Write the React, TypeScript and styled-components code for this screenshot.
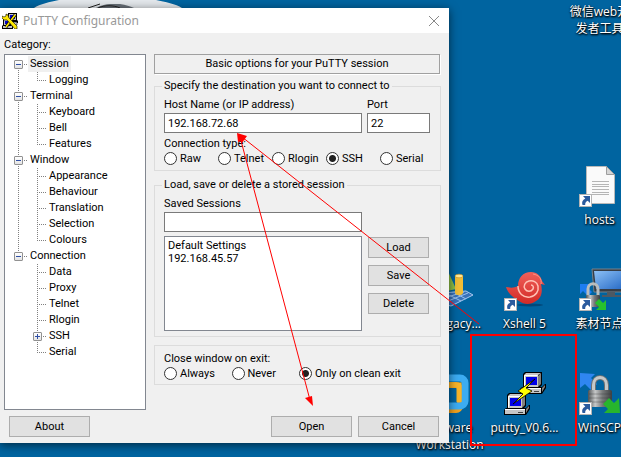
import React, { useState } from "react";
import styled, { createGlobalStyle, css } from "styled-components";

const GlobalStyle = createGlobalStyle`
  *, *::before, *::after { box-sizing: border-box; }
  body { margin: 0; background: #0064a0; }
  body, button, input, select {
    font-family: Roboto, "Liberation Sans", sans-serif;
    font-size: 11px;
    line-height: 16px;
    color: #000;
  }
`;

/* ---------- desktop ---------- */

const Desktop = styled.main`
  position: relative;
  min-height: 100vh;
  padding-top: 8px;
  overflow: hidden;
  background: #0064a0;
`;

const Wallpaper = styled.svg`
  position: absolute;
  top: 0;
  left: 30px;
`;

const IconField = styled.div`
  position: absolute;
  top: -48px;
  right: -16px;
  display: grid;
  grid-template-columns: repeat(3, 75px);
  grid-auto-rows: 104px;
`;

const Shortcut = styled.a<{ $column: number; $row: number }>`
  grid-column: ${(p) => p.$column};
  grid-row: ${(p) => p.$row};
  display: flex;
  flex-direction: column;
  align-items: center;
  gap: 3px;
  color: #fff;
  font-family: "Open Sans", "Noto Sans CJK SC", sans-serif;
  font-size: 12px;
  line-height: 17px;
  text-align: center;
  text-decoration: none;
  white-space: pre;
  text-shadow: 1px 1px 2px #000, 0 1px 2px #000;
`;

const TrailingLabel = styled.span`
  align-self: flex-end;
  padding-right: 6px;
`;

const Picture = styled.svg`
  display: block;
  width: 48px;
  height: 48px;
  flex: none;
`;

const Annotations = styled.svg`
  position: absolute;
  top: 0;
  left: 0;
  pointer-events: none;
`;

/* ---------- dialog ---------- */

const Dialog = styled.form`
  position: relative;
  width: calc(100% - 172px);
  min-width: 440px;
  background: #f0f0f0;
  box-shadow: 0 2px 9px rgba(0, 0, 0, 0.6);
`;

const TitleBar = styled.header`
  display: flex;
  align-items: center;
  gap: 5px;
  height: 25px;
  padding: 0 8px 0 2px;
  background: #fff;
`;

const Title = styled.h1`
  flex: 1;
  margin: 0;
  color: #999;
  font-family: "Noto Sans", sans-serif;
  font-size: 12px;
  font-weight: 400;
`;

const CloseButton = styled.button`
  display: grid;
  place-items: center;
  width: 14px;
  height: 14px;
  padding: 0;
  border: 0;
  background: none;
`;

const Body = styled.div`
  display: grid;
  grid-template-columns: 142px minmax(0, 1fr);
  column-gap: 8px;
  padding: 4px 8px 6px 4px;
`;

const Caption = styled.div`
  grid-column: 1 / -1;
  height: 17px;
`;

const Tree = styled.ul`
  min-height: 356px;
  margin: 0;
  padding: 1px 4px;
  list-style: none;
  background: #fff;
  border: 1px solid #828790;
`;

const TreeRow = styled.li`
  display: flex;
  height: 16px;
`;

const dotsDown = "repeating-linear-gradient(to bottom, #808080 0 1px, transparent 1px 2px)";
const dotsAcross = "repeating-linear-gradient(to right, #808080 0 1px, transparent 1px 2px)";

const Guide = styled.span<{ $up?: boolean; $down?: boolean; $across?: boolean }>`
  display: grid;
  place-items: center;
  flex: none;
  width: 19px;
  height: 16px;
  background-image: ${dotsDown}, ${dotsDown}, ${dotsAcross};
  background-repeat: no-repeat;
  background-position: 9px 0, 9px 8px, 9px 8px;
  background-size:
    ${(p) => (p.$up ? "1px 8px" : "0 0")},
    ${(p) => (p.$down ? "1px 8px" : "0 0")},
    ${(p) => (p.$across ? "10px 1px" : "0 0")};
`;

const Expander = styled.button`
  display: block;
  width: 9px;
  height: 9px;
  padding: 0;
  border: 1px solid #919191;
  border-radius: 1px;
  background: linear-gradient(#fff, #e4e4e4);

  svg { display: block; }
`;

const TreeLabel = styled.button<{ $selected: boolean }>`
  padding: 0 2px;
  border: 0;
  background: ${(p) => (p.$selected ? "#f0f0f0" : "transparent")};
`;

const Panel = styled.section`
  display: flex;
  flex-direction: column;
`;

const PanelTitle = styled.h2`
  margin: 0 1px 4px 0;
  border: 1px solid #a0a0a0;
  box-shadow: 1px 1px 0 #fff;
  font-size: 11px;
  font-weight: 400;
  line-height: 18px;
  text-align: center;
`;

const Group = styled.fieldset`
  min-width: 0;
  margin: 0 0 6px;
  padding: 3px 10px 5px 9px;
  border: 1px solid #dcdcdc;
`;

const PlainGroup = styled(Group)`
  margin: 2px 0 0;
  padding: 5px 10px 4px 9px;
`;

const Legend = styled.legend`
  margin-left: -2px;
  padding: 0 2px;
  line-height: 16px;
`;

const Text = styled.span`
  display: block;
  line-height: 16px;
`;

const HostRow = styled.div`
  display: grid;
  grid-template-columns: minmax(0, 1fr) 63px;
  column-gap: 5px;
  margin-bottom: 3px;
`;

const TextBox = styled.input`
  display: block;
  width: 100%;
  height: 20px;
  padding: 0 3px;
  border: 1px solid #7a7a7a;
  border-radius: 0;
  background: #fff;
`;

const RadioRow = styled.div<{ $columns: number }>`
  display: grid;
  grid-template-columns: repeat(${(p) => p.$columns}, minmax(0, 1fr));
  margin-right: -4px;
`;

const RadioLabel = styled.label`
  display: flex;
  align-items: center;
  gap: 3px;
  height: 13px;
  white-space: nowrap;
`;

const RadioButton = styled.input`
  appearance: none;
  flex: none;
  width: 13px;
  height: 13px;
  margin: 0;
  border: 1px solid #333;
  border-radius: 50%;
  background: #fff;

  &:checked { background: radial-gradient(circle, #222 0 3px, #fff 4px); }
`;

const SessionGrid = styled.div`
  display: grid;
  grid-template-columns: minmax(0, 1fr) 61px;
  column-gap: 6px;
  padding-right: 1px;
`;

const SessionFields = styled.div`
  display: flex;
  flex-direction: column;
  gap: 4px;
`;

const SessionList = styled.select`
  width: 100%;
  height: 95px;
  padding: 2px 3px;
  border: 1px solid #828790;
  border-radius: 0;
  background: #fff;
  outline: 0;

  option {
    min-height: 13px;
    padding: 0;
    line-height: 13px;
  }
`;

const buttonFace = css`
  height: 21px;
  padding: 0;
  border: 1px solid #adadad;
  background: #e1e1e1;
`;

const PushButton = styled.button`
  ${buttonFace}
`;

const SessionButtons = styled.div`
  display: grid;
  align-content: end;
  gap: 7px;
  padding-bottom: 17px;
`;

const Footer = styled.footer`
  grid-column: 1 / -1;
  display: grid;
  grid-template-columns: 81px 1fr 81px 81px;
  column-gap: 6px;
  padding: 6px 2px 0 5px;
`;

const FooterButton = styled.button<{ $column: number }>`
  ${buttonFace}
  grid-column: ${(p) => p.$column};
`;

/* ---------- drawings ---------- */

const ShortcutBadge = () => (
  <g>
    <rect x="3.5" y="34.5" width="12" height="12" fill="#fff" stroke="#b4b4b4" />
    <path d="M7 36h7v7l-2.3-2.2c-2 1-2.600 2-2.500 4.200H6.500c-1-3 0-5 2.800-6.600z" fill="#2b5b9e" />
  </g>
);

const DocumentPicture = () => (
  <Picture viewBox="0 0 48 48">
    <path d="M10.500 6.500h20l8 8v29h-28z" fill="#fafafa" stroke="#b9b9b9" />
    <path d="M30.500 6.500v8h8z" fill="#d5d5d5" stroke="#9d9d9d" />
    <path d="M16 21.500h17M16 24.500h17M16 26.500h17M16 29.500h17M16 32.500h17M16 34.500h17" stroke="#b5b5b5" />
    <ShortcutBadge />
  </Picture>
);

const ShellPicture = () => (
  <Picture viewBox="0 0 48 48">
    <defs>
      <linearGradient id="shell" x1="0" y1="0" x2="0" y2="1">
        <stop offset="0" stopColor="#f0605a" />
        <stop offset="1" stopColor="#d22a26" />
      </linearGradient>
    </defs>
    <ellipse cx="29" cy="41" rx="13" ry="1.500" fill="#00487a" />
    <path d="M5 23c5 1 8 1 12-1 0-8 5-14 13-14 6 0 10 4 11 9l3 4-4-1c2 9 0 14-5 17-5 4-12 4-17 0C13 34 7 30 5 23z" fill="url(#shell)" />
    <path d="M17 22c0 7 5 12 12 11 6-1 9-6 8-11-1-4-5-6-9-5-4 1-6 5-4 8 2 3 6 3 8 0 1-2 0-4-2-4" fill="none" stroke="#ffc2b5" strokeWidth="1.500" />
    <path d="M40 20c1-5-2-9-8-10" fill="none" stroke="#ff9384" />
    <ShortcutBadge />
  </Picture>
);

const Steel = ({ id }: { id: string }) => (
  <linearGradient id={id}>
    <stop offset="0" stopColor="#4e5153" />
    <stop offset=".3" stopColor="#c6c8c8" />
    <stop offset=".6" stopColor="#77797a" />
    <stop offset="1" stopColor="#3d4042" />
  </linearGradient>
);

const NodePicture = () => (
  <Picture viewBox="0 0 48 48">
    <defs>
      <Steel id="steelNode" />
      <linearGradient id="screen" x1="0" y1="0" x2="1" y2="1">
        <stop offset="0" stopColor="#8cc0f5" />
        <stop offset="1" stopColor="#2468c4" />
      </linearGradient>
    </defs>
    <path d="M16 5h34v23H18z" fill="#363d45" stroke="#76828c" />
    <path d="M18 7h32v18H20z" fill="url(#screen)" />
    <path d="M31 28h8v3h6v2H26v-2h5z" fill="#4e5963" />
    <path d="M4 20h10l-3 3 5 5-4 4-5-5-3 3z" fill="#1d7df2" />
    <path d="M12 32v-7c0-7 10-7 10 0v7" fill="none" stroke="#b9bdbd" strokeWidth="3" />
    <rect x="10" y="31" width="14" height="12" rx="1" fill="url(#steelNode)" />
    <path d="M30 46H20l3-3-4-4 4-4 4 4 3-3z" fill="#27c12d" />
    <ShortcutBadge />
  </Picture>
);

const PadlockPicture = () => (
  <Picture viewBox="0 0 48 48">
    <defs><Steel id="steelLock" /></defs>
    <path d="M4 5l15 1-4 4 6 6-6 6-6-6-5 4z" fill="#2f86f0" />
    <path d="M17.500 24v-7c0-10 13-10 13 0v7" fill="none" stroke="#6c7072" strokeWidth="5" />
    <path d="M17.500 24v-7c0-10 13-10 13 0v7" fill="none" stroke="#c5c8c9" strokeWidth="3" />
    <rect x="12" y="22" width="24" height="17" rx="1.500" fill="url(#steelLock)" />
    <path d="M13 26h22M13 30h22M13 34h22" stroke="#333" strokeOpacity=".35" />
    <path d="M44 45H28l4-4-5-5 6-6 5 5 5-5z" fill="#27b52d" />
    <ShortcutBadge />
  </Picture>
);

const Computer = ({ x, y }: { x: number; y: number }) => (
  <g transform={`translate(${x} ${y})`}>
    <path d="M3 2l2-2h17v13l-3 3H3z" fill="#000" />
    <path d="M4 3l2-2h15l-3 2v12H4z" fill="#c6c6c6" />
    <path d="M18 4l3-3v11l-3 3z" fill="#808080" />
    <path d="M6 5h11v8H6z" fill="#0000e8" />
    <path d="M4.500 14.500V3.500h13" fill="none" stroke="#fff" />
    <path d="M0 17l2-2h20l3-3h1v4l-4 6H0z" fill="#000" />
    <path d="M1 16h20v5H1z" fill="#c6c6c6" />
    <path d="M1 16.500h20" stroke="#fff" />
    <path d="M22 16l3-3v2l-3 5z" fill="#808080" />
    <path d="M14 19.500h5" stroke="#444" />
  </g>
);

const PuttyPicture = () => (
  <Picture viewBox="0 0 48 48">
    <Computer x={19} y={4} />
    <Computer x={3} y={25} />
    <path d="M34 11L17 23l5 3-10 10 19-13-6-3z" fill="#ffff00" stroke="#000" strokeWidth=".8" />
  </Picture>
);

const ChartPicture = () => (
  <Picture viewBox="0 0 48 48">
    <path d="M4 30l36-3 7 4-22 11-17-4z" fill="#3972ba" stroke="#a8c9ef" />
    <path d="M22 37l20-8M18 34l20-6M29 29l11 6M23 31l12 6" stroke="#9bc1ed" />
    <path d="M21 5l9 20-13 3z" fill="#8dbf45" />
    <path d="M29 12v17c1 3 7 3 8 0V12z" fill="#f0bd36" />
    <ellipse cx="33" cy="12" rx="4" ry="1.800" fill="#ffe896" stroke="#c98e1f" strokeWidth=".6" />
  </Picture>
);

const BoxesPicture = () => (
  <Picture viewBox="0 0 48 48">
    <rect x="9" y="17" width="25" height="25" rx="4" fill="none" stroke="#f2a21d" strokeWidth="6" />
    <rect x="14" y="10" width="25" height="28" rx="5" fill="none" stroke="#3cacf2" strokeWidth="7" />
    <path d="M17 17h16v17" fill="none" stroke="#f7b42a" strokeWidth="5" />
  </Picture>
);

const AppIcon = () => (
  <svg width="16" height="16" viewBox="0 0 16 16" aria-hidden="true">
    <path d="M6 0h9v7l1 1v2H6zM1 6h8v6l2 1v3H0v-3l1-1z" fill="#000" />
    <path d="M7 1h7v6H7zM2 7h6v5H2zM1 13h9v2H1z" fill="#c0c0c0" />
    <path d="M8 2h5v4H8zM3 8h4v3H3z" fill="#0000c8" />
    <path d="M10 9h5v3h-5z" fill="#c0c0c0" stroke="#000" strokeWidth=".5" />
    <path d="M13 2L4 14" stroke="#000" strokeWidth="3" />
    <path d="M13 2L4 14" stroke="#ffe900" strokeWidth="1.500" />
    <path d="M0 3l2 1 2-1V1l2 1 1 3 8 8v3h-2L5 7 2 7 0 5z" fill="#ffe900" stroke="#000" strokeWidth=".6" />
  </svg>
);

/* ---------- content ---------- */

type Node = { name: string; children?: Node[]; closed?: boolean };

const categories: Node[] = [
  { name: "Session", children: [{ name: "Logging" }] },
  { name: "Terminal", children: [{ name: "Keyboard" }, { name: "Bell" }, { name: "Features" }] },
  {
    name: "Window",
    children: [
      { name: "Appearance" },
      { name: "Behaviour" },
      { name: "Translation" },
      { name: "Selection" },
      { name: "Colours" },
    ],
  },
  {
    name: "Connection",
    children: [
      { name: "Data" },
      { name: "Proxy" },
      { name: "Telnet" },
      { name: "Rlogin" },
      { name: "SSH", closed: true },
      { name: "Serial" },
    ],
  },
];

const Toggle = ({ name, closed }: { name: string; closed?: boolean }) => (
  <Expander type="button" aria-label={`${closed ? "Expand" : "Collapse"} ${name}`}>
    <svg width="7" height="7" viewBox="0 0 7 7">
      <path d={closed ? "M1 3.500h5M3.500 1v5" : "M1 3.500h5"} stroke="#2f4fa5" />
    </svg>
  </Expander>
);

function CategoryTree() {
  const [selected, setSelected] = useState("Session");
  const lastParent = categories.length - 1;
  return (
    <Tree aria-label="Category">
      {categories.map((parent, i) => (
        <React.Fragment key={parent.name}>
          <TreeRow>
            <Guide $up={i > 0} $down={i < lastParent} $across>
              <Toggle name={parent.name} />
            </Guide>
            <TreeLabel type="button" $selected={selected === parent.name} onClick={() => setSelected(parent.name)}>
              {parent.name}
            </TreeLabel>
          </TreeRow>
          {parent.children?.map((child, j, all) => (
            <TreeRow key={child.name}>
              <Guide $up={i < lastParent} $down={i < lastParent} />
              <Guide $up $down={j < all.length - 1} $across>
                {child.closed && <Toggle name={child.name} closed />}
              </Guide>
              <TreeLabel type="button" $selected={selected === child.name} onClick={() => setSelected(child.name)}>
                {child.name}
              </TreeLabel>
            </TreeRow>
          ))}
        </React.Fragment>
      ))}
    </Tree>
  );
}

type RadiosProps = { name: string; columns: number; options: string[]; initial: string };

function Radios({ name, columns, options, initial }: RadiosProps) {
  return (
    <RadioRow $columns={columns} role="radiogroup">
      {options.map((option) => (
        <RadioLabel key={option}>
          <RadioButton type="radio" name={name} value={option} defaultChecked={option === initial} />
          {option}
        </RadioLabel>
      ))}
    </RadioRow>
  );
}

export default function App() {
  return (
    <Desktop>
      <GlobalStyle />
      <Wallpaper width="160" height="12" viewBox="0 0 160 12" aria-hidden="true">
        <path d="M4 8C10 4 20 2 29 0h97c9 2 20 4 26 8v4H4z" fill="#e4e8ec" />
        <path d="M66 8c6-3 10-4 14-4h10c6 1 10 2 14 4z" fill="#687078" />
        <path d="M58 8l12-4M68 8c6-3 16-3 22 0" stroke="#222" fill="none" />
      </Wallpaper>

      <IconField>
        <Shortcut href="#devtools" $column={3} $row={1}>
          <Picture viewBox="0 0 48 48" />
          {"微信web开\n发者工具"}
        </Shortcut>
        <Shortcut href="#hosts" $column={3} $row={3}><DocumentPicture />hosts</Shortcut>
        <Shortcut href="#legacy" $column={1} $row={4}>
          <ChartPicture />
          <TrailingLabel>Legacy...</TrailingLabel>
        </Shortcut>
        <Shortcut href="#xshell" $column={2} $row={4}><ShellPicture />Xshell 5</Shortcut>
        <Shortcut href="#nodes" $column={3} $row={4}><NodePicture />素材节点</Shortcut>
        <Shortcut href="#vmware" $column={1} $row={5}><BoxesPicture />{"VMware\nWorkstation"}</Shortcut>
        <Shortcut href="#putty" $column={2} $row={5}><PuttyPicture />putty_V0.6...</Shortcut>
        <Shortcut href="#winscp" $column={3} $row={5}><PadlockPicture />WinSCP</Shortcut>
      </IconField>

      <Dialog onSubmit={(e) => e.preventDefault()}>
        <TitleBar>
          <AppIcon />
          <Title>PuTTY Configuration</Title>
          <CloseButton type="button" aria-label="Close">
            <svg width="12" height="12" viewBox="0 0 12 12">
              <path d="M1 1l10 10M11 1L1 11" stroke="#888" />
            </svg>
          </CloseButton>
        </TitleBar>

        <Body>
          <Caption>Category:</Caption>
          <CategoryTree />

          <Panel>
            <PanelTitle>Basic options for your PuTTY session</PanelTitle>

            <Group>
              <Legend>Specify the destination you want to connect to</Legend>
              <HostRow>
                <label>
                  <Text>Host Name (or IP address)</Text>
                  <TextBox defaultValue="192.168.72.68" />
                </label>
                <label>
                  <Text>Port</Text>
                  <TextBox defaultValue="22" />
                </label>
              </HostRow>
              <Text>Connection type:</Text>
              <Radios
                name="protocol"
                columns={5}
                options={["Raw", "Telnet", "Rlogin", "SSH", "Serial"]}
                initial="SSH"
              />
            </Group>

            <Group>
              <Legend>Load, save or delete a stored session</Legend>
              <SessionGrid>
                <SessionFields>
                  <label>
                    <Text>Saved Sessions</Text>
                    <TextBox />
                  </label>
                  <SessionList size={6} aria-label="Stored sessions">
                    <option>Default Settings</option>
                    <option>192.168.45.57</option>
                  </SessionList>
                </SessionFields>
                <SessionButtons>
                  <PushButton type="button">Load</PushButton>
                  <PushButton type="button">Save</PushButton>
                  <PushButton type="button">Delete</PushButton>
                </SessionButtons>
              </SessionGrid>
            </Group>

            <PlainGroup aria-label="Close window on exit">
              <Text>Close window on exit:</Text>
              <Radios
                name="exit"
                columns={4}
                options={["Always", "Never", "Only on clean exit"]}
                initial="Only on clean exit"
              />
            </PlainGroup>
          </Panel>

          <Footer>
            <FooterButton type="button" $column={1}>About</FooterButton>
            <FooterButton type="submit" $column={3}>Open</FooterButton>
            <FooterButton type="button" $column={4}>Cancel</FooterButton>
          </Footer>
        </Body>
      </Dialog>

      <Annotations width="621" height="457" viewBox="0 0 621 457" aria-hidden="true">
        <g stroke="#f00" fill="none">
          <path d="M479 324L242 137M240 137l70 263" />
          <rect x="471" y="335" width="105" height="110" strokeWidth="2" />
        </g>
        <path d="M237 133l10 3-5 7zM237 133l8 7-7 2zM313 406l-8-8 7-2z" fill="#f00" />
      </Annotations>
    </Desktop>
  );
}
